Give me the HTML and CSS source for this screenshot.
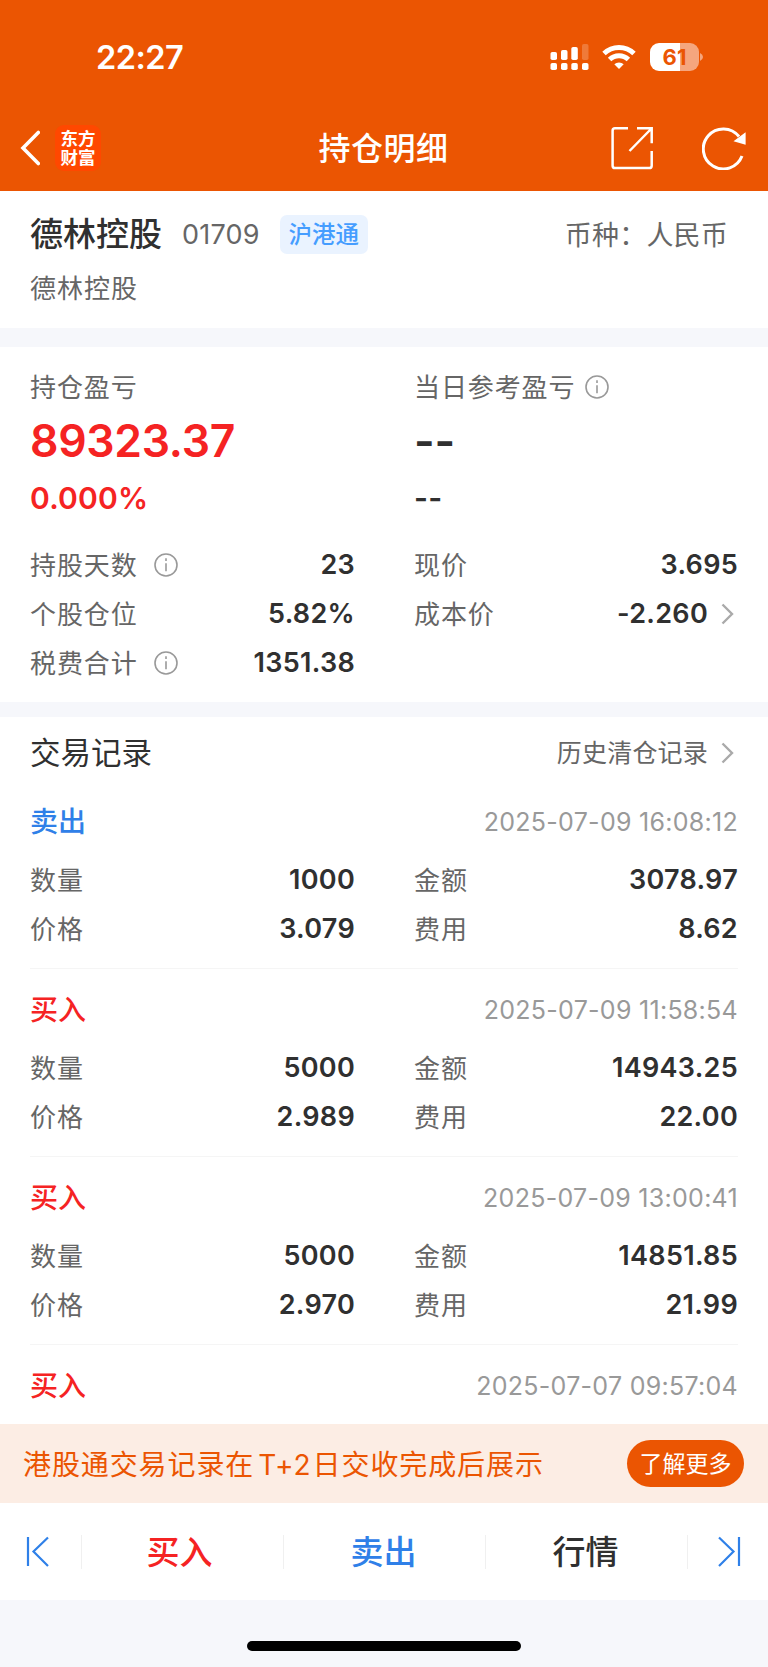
FILE: index.html
```html
<!DOCTYPE html>
<html lang="zh-CN">
<head>
    <meta charset="UTF-8">
    <meta name="viewport" content="width=device-width, initial-scale=1.0">
    <title>持仓明细</title>
    <link rel="stylesheet" href="styles.css">
</head>
<body>
    <header class="top">
        <div class="status-bar">
            <span class="time">22:27</span>
            <div class="status-icons">
                <svg class="signal" width="39" height="28" viewBox="0 0 39 28" fill="#fff">
                    <rect x="0.5" y="9" width="6.5" height="8" rx="1.8"/>
                    <rect x="11" y="7" width="6.5" height="10" rx="1.8"/>
                    <rect x="21.3" y="4" width="6.5" height="13" rx="1.8"/>
                    <rect x="32" y="1" width="6.5" height="16" rx="1.8" opacity="0.22"/>
                    <rect x="0.5" y="20" width="6.5" height="7" rx="1.8"/>
                    <rect x="11" y="20" width="6.5" height="7" rx="1.8"/>
                    <rect x="21.3" y="20" width="6.5" height="7" rx="1.8"/>
                    <rect x="32" y="20" width="6.5" height="7" rx="1.8"/>
                </svg>
                <svg class="wifi" width="34" height="26" viewBox="0 0 34 26" fill="none" stroke="#fff" stroke-width="4.9">
                    <path d="M2 9.6 A21.5 21.5 0 0 1 32 9.6"/>
                    <path d="M7.6 15.6 A13.4 13.4 0 0 1 26.4 15.6"/>
                    <path d="M12.3 20.3 A6.8 6.8 0 0 1 21.7 20.3 L17 25 Z" fill="#fff" stroke="none"/>
                </svg>
                <div class="battery"><span>61</span></div>
                <svg class="battery-cap" width="3" height="8" viewBox="0 0 3 8"><path d="M0 0 Q3 1.5 3 4 T0 8 Z" fill="#f5a67e"/></svg>
            </div>
        </div>
        <nav class="nav">
            <div class="nav-left">
                <svg width="20" height="36" viewBox="0 0 20 36" fill="none" stroke="#fff" stroke-width="3.6" stroke-linecap="round"><path d="M18.3 2.5 L3 18 L18.3 33.5"/></svg>
                <div class="logo"><span>东方</span><span>财富</span></div>
            </div>
            <h1>持仓明细</h1>
            <div class="nav-right">
                <svg width="43" height="44" viewBox="0 0 43 44" fill="none" stroke="#fff" stroke-width="2.5">
                    <path d="M17 2.3 H4 Q1.6 2.3 1.6 4.7 V39.7 Q1.6 42.1 4 42.1 H38.3 Q40.7 42.1 40.7 39.7 V25"/>
                    <path d="M26 2.3 H40.7 V17.3 M40 3 L18.5 25"/>
                </svg>
                <svg width="45" height="44" viewBox="0 0 45 44" fill="none" stroke="#fff" stroke-width="3">
                    <path d="M40 30 A20 20 0 1 1 37 10.5"/>
                    <path d="M43.6 6.2 V18.8 L31.5 15.2 Z" fill="#fff" stroke="none"/>
                </svg>
            </div>
        </nav>
    </header>

    <section class="stock">
        <div class="stock-row">
            <h2>德林控股</h2>
            <span class="code">01709</span>
            <span class="tag">沪港通</span>
            <span class="currency">币种：人民币</span>
        </div>
        <div class="stock-sub">德林控股</div>
    </section>

    <section class="position">
        <div class="profit">
            <div>
                <div class="label">持仓盈亏</div>
                <div class="big red">89323.37</div>
                <div class="rate red">0.000%</div>
            </div>
            <div>
                <div class="label">当日参考盈亏<svg class="info near" viewBox="0 0 24 24"><circle cx="12" cy="12" r="11"/><path d="M12 10.3 V18.3 M12 5.3 V7.9"/></svg></div>
                <div class="big">--</div>
                <div class="rate">--</div>
            </div>
        </div>
        <div class="grid">
            <div class="item"><span class="label">持股天数<svg class="info" viewBox="0 0 24 24"><circle cx="12" cy="12" r="11"/><path d="M12 10.3 V18.3 M12 5.3 V7.9"/></svg></span><b>23</b></div>
            <div class="item"><span class="label">现价</span><b>3.695</b></div>
            <div class="item"><span class="label">个股仓位</span><b>5.82%</b></div>
            <div class="item"><span class="label">成本价</span><b>-2.260</b><svg class="arrow" viewBox="0 0 13 22"><path d="M1.5 1.5 L11 11 L1.5 20.5"/></svg></div>
            <div class="item"><span class="label">税费合计<svg class="info" viewBox="0 0 24 24"><circle cx="12" cy="12" r="11"/><path d="M12 10.3 V18.3 M12 5.3 V7.9"/></svg></span><b>1351.38</b></div>
        </div>
    </section>

    <section class="records">
        <div class="records-head">
            <h3>交易记录</h3>
            <span class="history">历史清仓记录</span>
            <svg class="arrow" viewBox="0 0 13 22"><path d="M1.5 1.5 L11 11 L1.5 20.5"/></svg>
        </div>

        <div class="record">
            <div class="record-head"><span class="sell">卖出</span><time>2025-07-09 16:08:12</time></div>
            <div class="grid">
                <div class="item"><span class="label">数量</span><b>1000</b></div>
                <div class="item"><span class="label">金额</span><b>3078.97</b></div>
                <div class="item"><span class="label">价格</span><b>3.079</b></div>
                <div class="item"><span class="label">费用</span><b>8.62</b></div>
            </div>
        </div>
        <div class="record">
            <div class="record-head"><span class="buy">买入</span><time>2025-07-09 11:58:54</time></div>
            <div class="grid">
                <div class="item"><span class="label">数量</span><b>5000</b></div>
                <div class="item"><span class="label">金额</span><b>14943.25</b></div>
                <div class="item"><span class="label">价格</span><b>2.989</b></div>
                <div class="item"><span class="label">费用</span><b>22.00</b></div>
            </div>
        </div>
        <div class="record">
            <div class="record-head"><span class="buy">买入</span><time>2025-07-09 13:00:41</time></div>
            <div class="grid">
                <div class="item"><span class="label">数量</span><b>5000</b></div>
                <div class="item"><span class="label">金额</span><b>14851.85</b></div>
                <div class="item"><span class="label">价格</span><b>2.970</b></div>
                <div class="item"><span class="label">费用</span><b>21.99</b></div>
            </div>
        </div>
        <div class="record last">
            <div class="record-head"><span class="buy">买入</span><time>2025-07-07 09:57:04</time></div>
        </div>
    </section>

    <div class="notice">
        <span>港股通交易记录在<i>T+2</i>日交收完成后展示</span>
        <button>了解更多</button>
    </div>

    <footer class="toolbar">
        <div class="edge"><svg width="24" height="31" viewBox="0 0 24 31"><path d="M2 1 V30 M22 1.5 L7.5 15.5 L22 30"/></svg></div>
        <div class="tab buy">买入</div>
        <div class="tab sell">卖出</div>
        <div class="tab">行情</div>
        <div class="edge"><svg width="24" height="31" viewBox="0 0 24 31"><path d="M22 1 V30 M2 1.5 L16.5 15.5 L2 30"/></svg></div>
    </footer>
    <div class="home"><div class="home-bar"></div></div>
</body>
</html>
```
FILE: styles.css
```css
* {
    box-sizing: border-box;
}

body {
    margin: 0;
    height: 1667px;
    overflow: hidden;
    background: #f6f7fb;
    color: #303030;
    font-family: Inter, "Noto Sans CJK SC", sans-serif;
    font-size: 26px;
}

h1, h2, h3 {
    margin: 0;
    font-weight: 500;
}

.top {
    height: 191px;
    background: #eb5502;
    color: #fff;
}

.status-bar {
    height: 105px;
    padding: 9px 65px 0 96px;
    display: flex;
    align-items: center;
    justify-content: space-between;
}

.time {
    font-size: 32.5px;
    font-weight: 600;
    letter-spacing: -0.5px;
}

.status-icons {
    display: flex;
    align-items: center;
}

.wifi {
    margin: 0 14px 0 13px;
}

.battery {
    width: 49px;
    height: 28px;
    border-radius: 9px;
    background: linear-gradient(90deg, #fff 61%, #f5a67e 61%);
    color: #eb5502;
    font-size: 22px;
    font-weight: 700;
    line-height: 28px;
    text-align: center;
}

.battery-cap {
    margin-left: 1px;
}

.nav {
    height: 86px;
    padding: 0 21px 0 20px;
    display: grid;
    grid-template-columns: 1fr auto 1fr;
    align-items: center;
}

.nav-left {
    display: flex;
    align-items: center;
    gap: 15px;
}

.logo {
    width: 46px;
    height: 46px;
    border-radius: 9px;
    background: #ff4800;
    display: flex;
    flex-direction: column;
    align-items: center;
    justify-content: center;
    padding-bottom: 1px;
    font-size: 17.5px;
    font-weight: 700;
    line-height: 19px;
}

.nav h1 {
    padding-top: 2px;
    font-size: 32px;
    line-height: 40px;
    letter-spacing: 0.5px;
}

.nav-right {
    display: flex;
    justify-content: flex-end;
    gap: 48px;
}

.stock {
    height: 137px;
    padding: 18px 40px 0 30px;
    background: #fff;
}

.stock-row {
    height: 50px;
    display: flex;
    align-items: center;
}

.stock h2 {
    font-size: 33px;
    line-height: 50px;
}

.code {
    margin-left: 20px;
    color: #666;
    font-size: 27px;
    letter-spacing: 0.2px;
}

.tag {
    width: 88px;
    height: 39px;
    margin-left: 20px;
    border-radius: 7px;
    background: #eaf3ff;
    color: #459dff;
    font-size: 23.5px;
    font-weight: 500;
    line-height: 39px;
    text-align: center;
}

.currency {
    margin-left: auto;
    padding-bottom: 2px;
    color: #666;
    font-size: 27px;
    letter-spacing: 0.2px;
}

.stock-sub {
    height: 58px;
    color: #666;
    font-size: 26px;
    letter-spacing: 1px;
    line-height: 60px;
}

.position {
    height: 355px;
    margin-top: 19px;
    padding: 18px 30px 0;
    background: #fff;
}

.profit {
    height: 175px;
    display: grid;
    grid-template-columns: 325px 324px;
    column-gap: 59px;
}

.label {
    display: flex;
    align-items: center;
    padding-bottom: 2px;
    color: #666;
    letter-spacing: 0.9px;
}

.profit .label {
    height: 44px;
    padding-bottom: 4px;
}

.info {
    width: 24px;
    height: 24px;
    margin: 2px 0 0 16px;
    fill: none;
    stroke: #999;
    stroke-width: 1.6;
}

.info.near {
    margin: 4px 0 0 10px;
}

.big {
    height: 64px;
    font-size: 44.5px;
    font-weight: 600;
    letter-spacing: -0.3px;
    line-height: 64px;
}

.rate {
    height: 50px;
    font-size: 30px;
    font-weight: 600;
    letter-spacing: 0.2px;
    line-height: 50px;
}

.red, .buy {
    color: #f52323;
}

.sell {
    color: #2f80e8;
}

.grid {
    display: grid;
    grid-template-columns: 325px 324px;
    grid-auto-rows: 49px;
    column-gap: 59px;
}

.item {
    display: flex;
    align-items: center;
}

.item b {
    margin-left: auto;
    font-size: 27px;
    font-weight: 600;
    letter-spacing: 0.3px;
}

.arrow {
    width: 13px;
    height: 22px;
    margin: 0 4px 0 13px;
    fill: none;
    stroke: #aaa;
    stroke-width: 2.4;
}

.records {
    height: 707px;
    margin-top: 15px;
    padding: 0 30px;
    overflow: hidden;
    background: #fff;
}

.records-head {
    height: 72px;
    margin-bottom: -8px;
    display: flex;
    align-items: center;
}

.records-head h3 {
    padding-bottom: 4px;
    font-size: 30.5px;
    font-weight: 400;
}

.history {
    margin-left: auto;
    padding-bottom: 4px;
    color: #666;
    font-size: 25px;
    letter-spacing: 0.2px;
}

.record {
    height: 188px;
    padding-top: 18px;
    border-bottom: 1px solid #f5f5f5;
}

.record.last {
    border: none;
}

.record-head {
    height: 44px;
    margin-bottom: 12px;
    display: flex;
    align-items: center;
    justify-content: space-between;
    font-size: 28px;
    font-weight: 500;
}

.record-head span {
    padding-bottom: 2px;
}

time {
    padding-top: 1px;
    color: #999;
    font-size: 25px;
    font-weight: 400;
    letter-spacing: 0.28px;
}

.notice {
    height: 79px;
    padding: 0 24px 0 23px;
    display: flex;
    align-items: center;
    justify-content: space-between;
    background: #fcede4;
    color: #eb5502;
    font-size: 28px;
    letter-spacing: 0.9px;
}

.notice span {
    padding-bottom: 2px;
}

.notice i {
    margin: 0 1px 0 4px;
    font-style: normal;
}

.notice button {
    width: 117px;
    height: 47px;
    padding: 0 0 3px;
    border: none;
    border-radius: 24px;
    background: #eb5502;
    color: #fff;
    font-family: inherit;
    font-size: 23px;
}

.toolbar {
    height: 97px;
    display: flex;
    align-items: center;
    background: #fff;
}

.toolbar svg {
    fill: none;
    stroke: #2f80e8;
    stroke-width: 2.2;
}

.edge {
    width: 81px;
    padding-right: 6px;
    display: flex;
    justify-content: center;
}

.tab {
    flex: 1;
    height: 34px;
    border-left: 1px solid #f0f0f0;
    font-size: 33px;
    font-weight: 500;
    line-height: 34px;
    text-align: center;
    text-indent: -2px;
}

.tab.buy {
    text-indent: -6px;
}

.tab + .edge {
    height: 34px;
    padding: 0 0 0 2px;
    align-items: center;
    border-left: 1px solid #f0f0f0;
}

.home {
    height: 67px;
    padding-top: 41px;
}

.home-bar {
    width: 274px;
    height: 10px;
    margin: 0 auto;
    border-radius: 5px;
    background: #000;
}
```
